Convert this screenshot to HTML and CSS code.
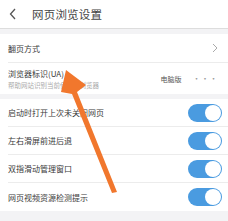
FILE: index.html
```html
<!DOCTYPE html>
<html lang="zh">
<head>
<meta charset="utf-8">
<link rel="stylesheet" href="styles.css">
</head>
<body>
<div class="page">
  <header class="header">
    <svg class="back" width="8" height="12" viewBox="0 0 8 12"><path d="M6 1 L1.5 6 L6 11" fill="none" stroke="#555" stroke-width="1.3"/></svg>
    <span class="title">网页浏览设置</span>
  </header>
  <div class="band"></div>
  <section class="group">
    <div class="row r1">
      <span class="label">翻页方式</span>
      <svg class="chev" width="6" height="10" viewBox="0 0 6 10"><path d="M1 1 L5 5 L1 9" fill="none" stroke="#aaa" stroke-width="1"/></svg>
    </div>
    <div class="row r2 last">
      <div class="stack">
        <span class="label">浏览器标识(UA)</span>
        <span class="sub">帮助网站识别当前使用的浏览器</span>
      </div>
      <span class="value">电脑版</span>
      <span class="dots">···</span>
    </div>
  </section>
  <div class="band b2"></div>
  <section class="group">
    <div class="row tr"><span class="label">启动时打开上次未关闭网页</span><span class="toggle"></span></div>
    <div class="row tr"><span class="label">左右滑屏前进后退</span><span class="toggle"></span></div>
    <div class="row tr"><span class="label">双指滑动管理窗口</span><span class="toggle"></span></div>
    <div class="row tr last"><span class="label">网页视频资源检测提示</span><span class="toggle"></span></div>
  </section>
  <div class="band b3"></div>
  <svg class="arrow" width="228" height="221" viewBox="0 0 228 221">
    <polygon points="66,70 86,85 77,92 117,192 112,193 72,94 61,92" fill="#f1772d"/>
  </svg>
</div>
</body>
</html>
```
FILE: styles.css
```css
* { box-sizing: border-box; margin: 0; padding: 0; }
html, body { width: 228px; height: 221px; overflow: hidden; background: #fff; }
body { font-family: "Noto Sans CJK SC", "Noto Sans", sans-serif; color: #333; }
.page { position: relative; width: 228px; height: 221px; display: flex; flex-direction: column; }
.header { height: 29px; display: flex; align-items: center; padding-left: 9px; border-bottom: 1px solid #ddd; }
.back { margin-right: 15px; }
.title { font-size: 11.5px; color: #444; letter-spacing: 0.2px; }
.band { height: 5px; background: #f3f3f5; flex: none; }
.b2 { height: 5px; }
.b3 { flex: 1; }
.group { display: flex; flex-direction: column; padding-left: 8px; }
.row { display: flex; align-items: center; border-bottom: 1px solid #ececec; padding-right: 6px; }
.row.last { border-bottom: none; }
.r1 { height: 29px; }
.r2 { height: 31px; }
.tr { height: 28px; }
.label { font-size: 8px; color: #3a3a3a; flex: 1; white-space: nowrap; }
.stack { display: flex; flex-direction: column; flex: 1; gap: 1px; }
.sub { font-size: 6.5px; color: #aaa; white-space: nowrap; }
.chev { margin-right: 4px; }
.value { font-size: 7px; color: #555; margin-right: 11px; }
.dots { font-size: 8px; color: #999; letter-spacing: 0.5px; margin-right: 4px; }
.toggle { width: 34px; height: 18px; border-radius: 9px; background: #4a9be0; position: relative; flex: none; }
.toggle::after { content: ""; position: absolute; right: 1px; top: 1px; width: 16px; height: 16px; border-radius: 50%; background: #fff; }
.arrow { position: absolute; left: 0; top: 0; pointer-events: none; }
```
